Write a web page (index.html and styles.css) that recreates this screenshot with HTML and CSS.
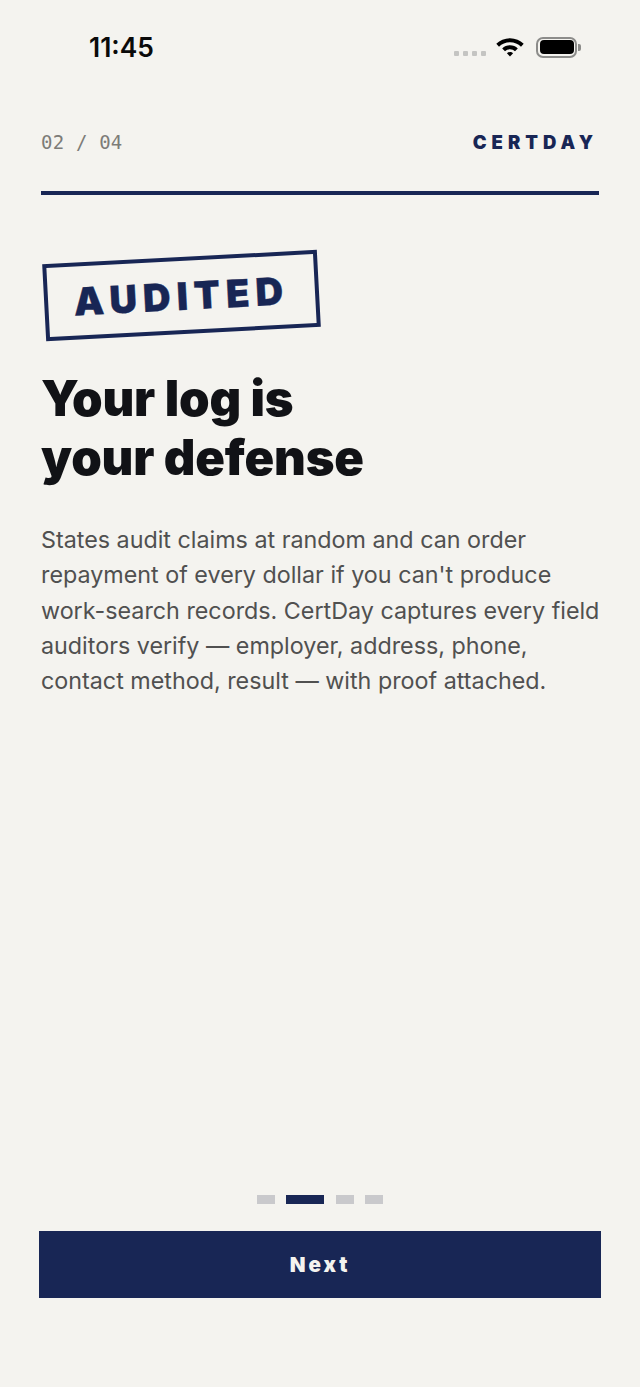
FILE: index.html
```html
<!DOCTYPE html>
<html lang="en">
<head>
<meta charset="utf-8">
<title>CertDay</title>
<link rel="stylesheet" href="styles.css">
</head>
<body>
<div class="screen">
  <header class="status">
    <span class="time">11:45</span>
    <div class="status-icons">
      <div class="signal"><i></i><i></i><i></i><i></i></div>
      <svg class="wifi" width="30" height="22" viewBox="0 0 30 22"><path d="M15 2.2C9.6 2.2 4.8 4.3 1.3 7.8l2.7 2.9C6.8 7.900 10.700 6.200 15 6.200s8.200 1.700 11 4.500l2.700-2.900C25.200 4.300 20.400 2.200 15 2.200z"/><path d="M15 9.200c-3 0-5.800 1.200-7.800 3.200l2.800 2.900c1.300-1.300 3-2.100 5-2.100s3.700.8 5 2.100l2.800-2.900c-2-2-4.800-3.200-7.800-3.200z"/><path d="M15 16c-1.200 0-2.300.5-3.100 1.300L15 20.500l3.100-3.200C17.300 16.500 16.200 16 15 16z"/></svg>
      <div class="battery"><div class="cell"><div class="fill"></div></div><div class="nub"></div></div>
    </div>
  </header>
  <main class="content">
    <div class="topbar">
      <span class="step">02 / 04</span>
      <span class="brand">CERTDAY</span>
    </div>
    <div class="stamp"><span>AUDITED</span></div>
    <h1>Your log is<br>your defense</h1>
    <p>States audit claims at random and can order<br>repayment of every dollar if you can't produce<br>work-search records. CertDay captures every field<br>auditors verify — employer, address, phone,<br>contact method, result — with proof attached.</p>
  </main>
  <footer class="footer">
    <div class="dots"><i></i><i class="active"></i><i></i><i></i></div>
    <button class="next" type="button">Next</button>
  </footer>
</div>
</body>
</html>
```
FILE: styles.css
```css
* { box-sizing: border-box; }
html, body { margin: 0; padding: 0; }
body { background: #f4f3ef; font-family: Inter, "Liberation Sans", sans-serif; }
.screen { width: 640px; height: 1387px; display: flex; flex-direction: column; overflow: hidden; }
.status { height: 94px; flex: none; display: flex; justify-content: space-between; align-items: flex-start; padding: 31px 59px 0 89px; }
.time { font-size: 26.4px; line-height: 32px; font-weight: 600; color: #0a0a0a; }
.status-icons { display: flex; align-items: center; height: 32px; }
.signal { display: flex; gap: 3.4px; margin-top: 13px; margin-right: 9px; }
.signal i { width: 5.500px; height: 5.500px; background: #c4c4c2; border-radius: 1px; }
.wifi { display: block; fill: #000; margin-right: 11px; }
.battery { display: flex; align-items: center; }
.cell { width: 41px; height: 21px; border: 2px solid #8c8c8a; border-radius: 7px; padding: 1.500px; }
.fill { width: 100%; height: 100%; background: #000; border-radius: 4px; }
.nub { width: 3px; height: 7px; background: #8c8c8a; border-radius: 0 2px 2px 0; margin-left: 1px; }
.content { flex: 1; padding: 0 41px; }
.topbar { display: flex; justify-content: space-between; align-items: center; height: 101px; padding-bottom: 2px; border-bottom: 4px solid #182655; padding-right: 4px; }
.step { font-family: "DejaVu Sans Mono", "Liberation Mono", monospace; font-size: 19px; letter-spacing: .2px; color: #7d7c78; }
.brand { font-size: 18.500px; font-weight: 900; letter-spacing: 5px; color: #182655; margin-right: -3px; }
.stamp { width: 275px; height: 77px; margin: 62px 0 0 3px; border: 4px solid #182655; display: flex; align-items: center; justify-content: center; transform: rotate(-3deg); }
.stamp span { font-size: 38px; font-weight: 900; letter-spacing: 6.200px; color: #182655; -webkit-text-stroke: .4px #182655; }
h1 { margin: 35px 0 0; font-size: 49px; line-height: 59px; font-weight: 900; letter-spacing: -.2px; color: #111216; }
p { margin: 35px 0 0; font-size: 23.300px; line-height: 35.250px; color: #505050; white-space: nowrap; }
.footer { flex: none; padding: 0 39px 89px; }
.dots { display: flex; justify-content: center; gap: 11.300px; margin-bottom: 27px; }
.dots i { width: 18px; height: 9px; background: #c9c9cc; }
.dots .active { width: 38px; background: #182655; }
.next { display: block; width: 100%; height: 67px; border: 0; border-radius: 0; background: #182655; color: #f4f3ef; font-family: Inter, sans-serif; font-size: 20.500px; font-weight: 900; letter-spacing: 3px; }
```
